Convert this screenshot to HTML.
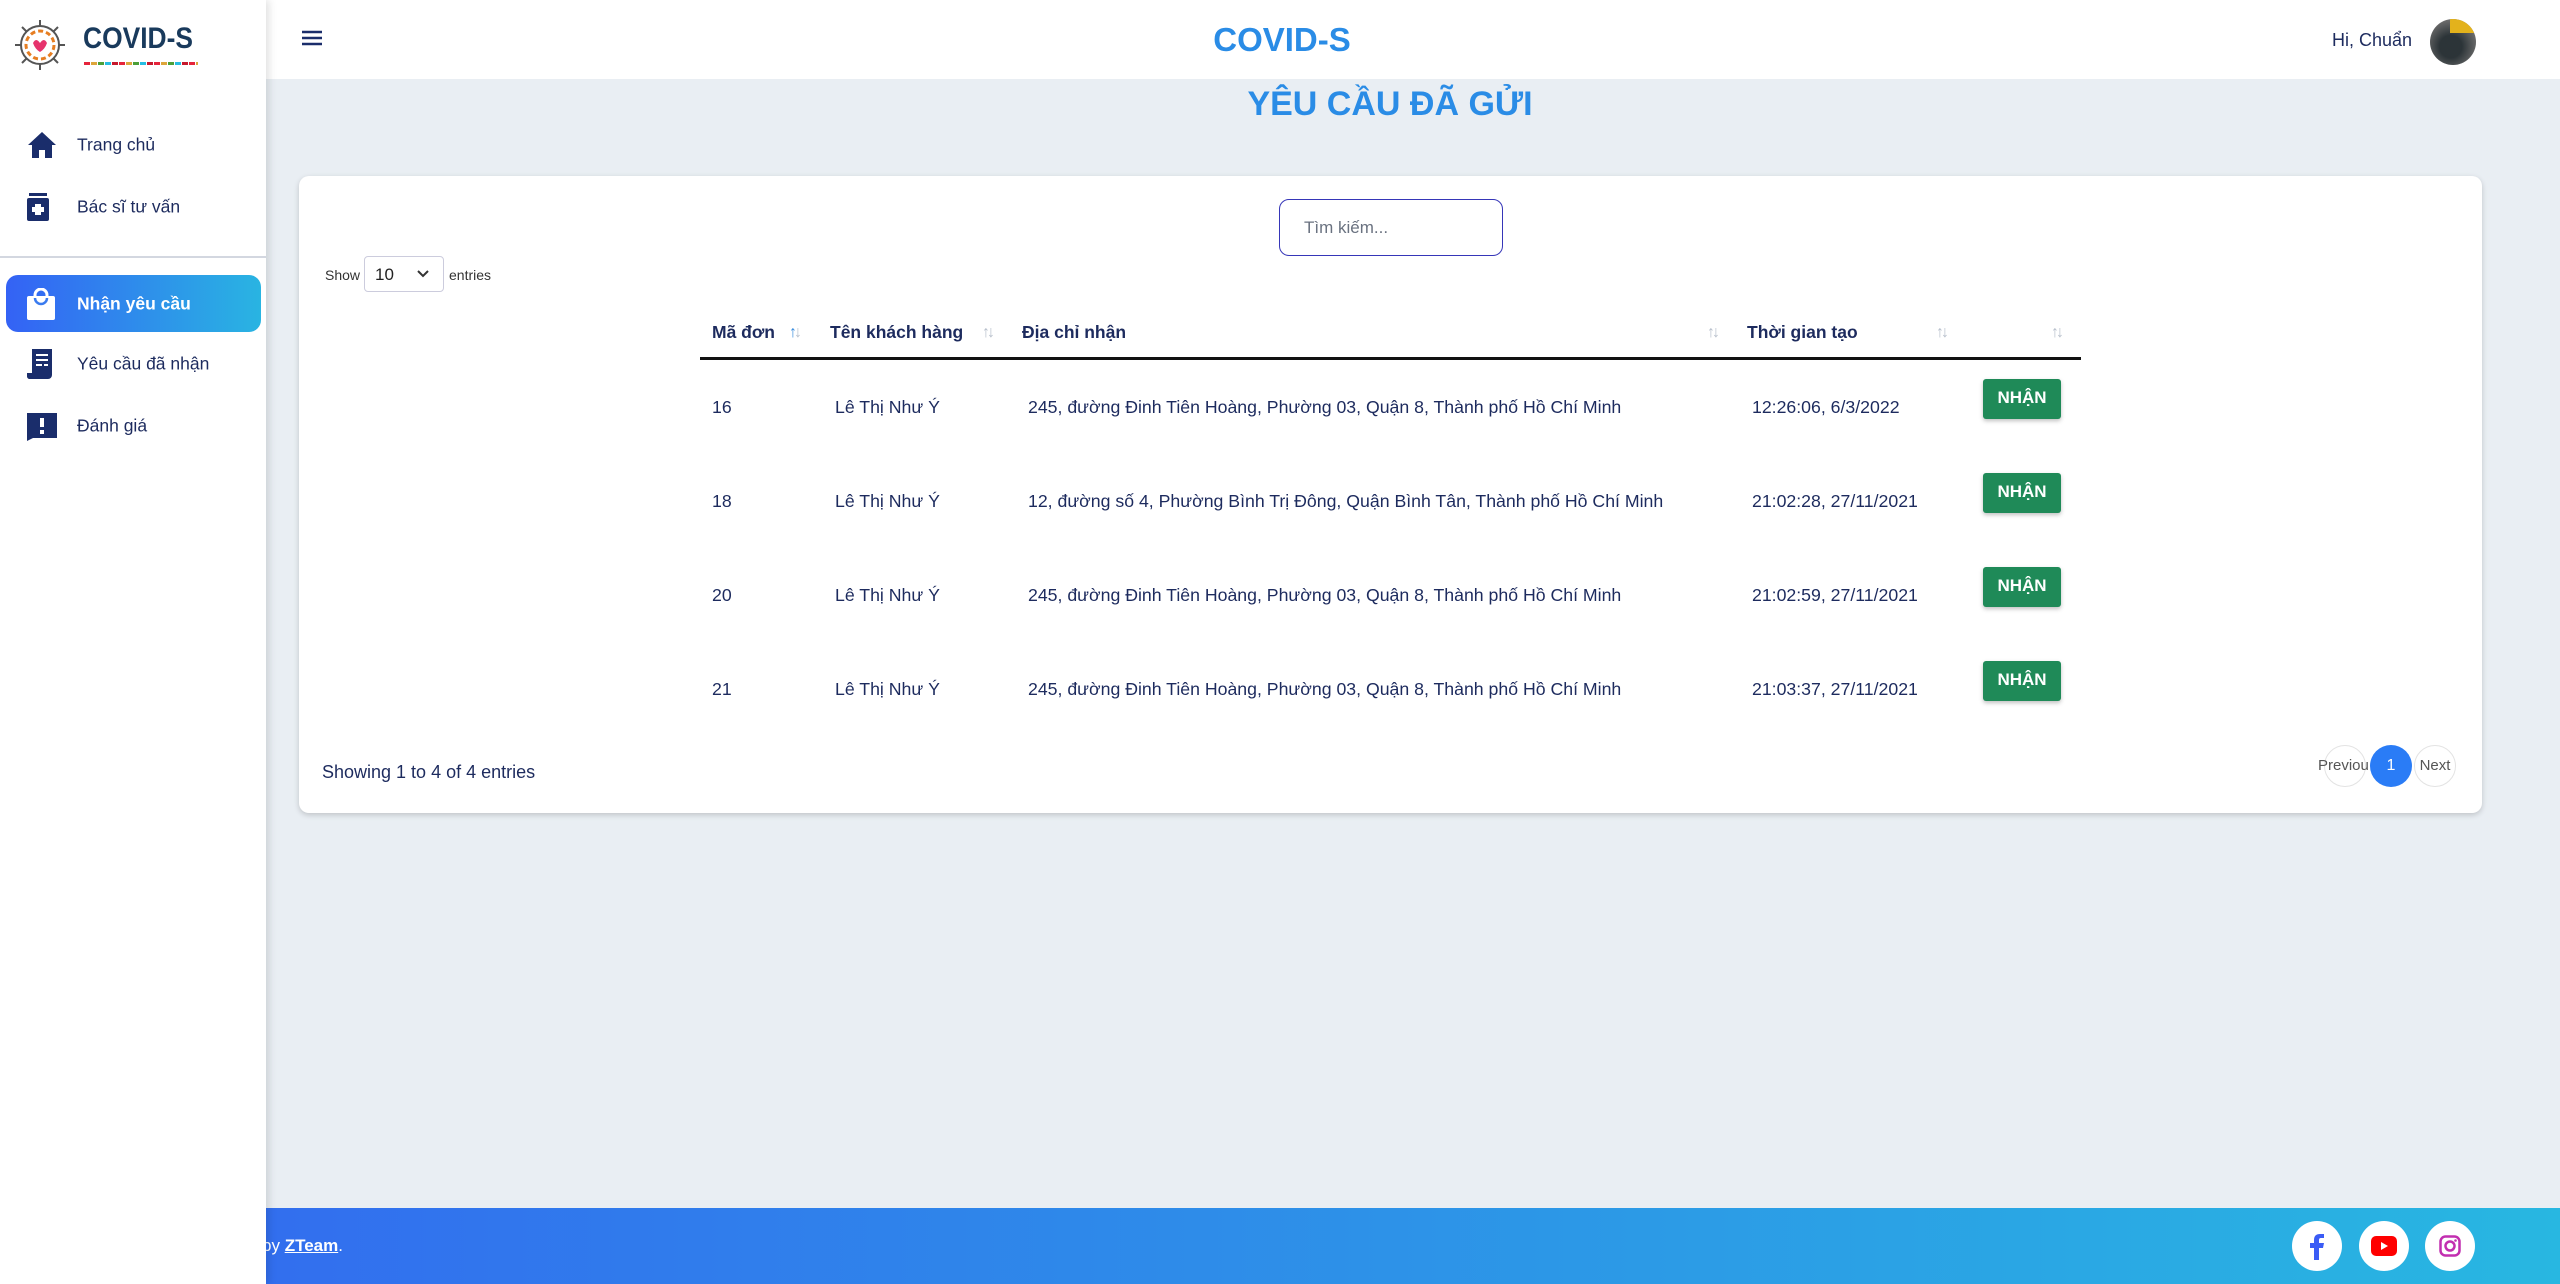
<!DOCTYPE html>
<html><head><meta charset="utf-8">
<style>
*{box-sizing:border-box;margin:0;padding:0}
body{width:2560px;height:1284px;overflow:hidden;background:#e9eef3;font-family:"Liberation Sans",sans-serif;color:#1d2b5e;position:relative}
.sb{position:absolute;left:0;top:0;width:266px;height:1284px;background:#fff;z-index:5;box-shadow:3px 0 8px rgba(0,0,0,.12)}
.hdr{position:absolute;left:266px;top:0;right:0;height:79px;background:#fff}
.item{position:absolute;left:0;width:266px;height:56px;font-size:17.5px;color:#1d2b5e}
.item .t{position:absolute;left:77px;top:50%;transform:translateY(-50%)}
.item svg{position:absolute;left:27px;top:50%;transform:translateY(-50%)}
.act{left:6px;width:255px;border-radius:12px;background:linear-gradient(90deg,#3462f5,#29b4e2);color:#fff;font-weight:bold}
.card{position:absolute;left:299px;top:176px;width:2183px;height:637px;background:#fff;border-radius:10px;box-shadow:0 2px 6px rgba(0,0,0,.18)}
.cell{position:absolute;font-size:17.7px;white-space:nowrap}
.th{font-weight:bold;font-size:17.5px}
.btn{position:absolute;left:1983px;width:78px;height:40px;background:#1f8a58;color:#fff;font-size:17px;font-weight:bold;text-align:center;line-height:38px;border-radius:3px;box-shadow:0 2px 4px rgba(0,0,0,.25)}
.ar{position:absolute;color:#b8c0cc;font-size:16px;letter-spacing:-3px}
.foot{position:absolute;left:0;top:1208px;width:2560px;height:76px;background:linear-gradient(90deg,#3366f0,#28b7e1)}
.soc{position:absolute;top:13px;width:50px;height:50px;border-radius:50%;background:#fff}
</style></head><body>
<div class="sb">
  <svg style="position:absolute;left:13px;top:18px" width="54" height="55" viewBox="0 0 54 55">
    <circle cx="27" cy="27" r="19" fill="none" stroke="#555" stroke-width="2"/>
    <circle cx="27" cy="27" r="14" fill="none" stroke="#e67e22" stroke-width="3" stroke-dasharray="5 3"/>
    <path d="M20 25 q3-6 7 0 q4-6 7 0 q-2 6-7 9 q-5-3-7-9z" fill="#e6336d"/>
    <path d="M27 2v6M27 46v6M2 27h6M46 27h6M9 9l5 5M45 9l-5 5M9 45l5-5M45 45l-5-5" stroke="#555" stroke-width="2"/>
  </svg>
  <div style="position:absolute;left:83px;top:22px;font-size:30px;font-weight:900;color:#193a5c;transform:scaleX(.88);transform-origin:left;white-space:nowrap">COVID-S</div>
  <div style="position:absolute;left:84px;top:62px;width:114px;height:3px;background:repeating-linear-gradient(90deg,#e5243b 0 6px,transparent 6px 7px,#dda63a 7px 13px,transparent 13px 14px,#4c9f38 14px 20px,transparent 20px 21px,#26bde2 21px 27px,transparent 27px 28px,#c5192d 28px 34px,transparent 34px 35px)"></div>
  <div class="item" style="top:117px"><svg width="30" height="28" viewBox="0 0 30 28"><path d="M15 1L1 14h4v13h7v-8h6v8h7V14h4z" fill="#1a2d6b"/></svg><span class="t">Trang chủ</span></div>
  <div class="item" style="top:179px"><svg width="22" height="28" viewBox="0 0 22 28"><rect x="2" y="0" width="18" height="3" fill="#1a2d6b"/><rect x="0" y="5" width="22" height="23" rx="2" fill="#1a2d6b"/><path d="M8 11h6v3h3v5h-3v3H8v-3H5v-5h3z" fill="#fff"/></svg><span class="t">Bác sĩ tư vấn</span></div>
  <div style="position:absolute;left:0;top:256px;width:266px;height:2px;background:#d3d7e0"></div>
  <div class="item act" style="top:275px;height:57px"><svg style="left:21px" width="28" height="32" viewBox="0 0 28 32"><rect x="0" y="8" width="28" height="24" rx="2" fill="#fff"/><path d="M8 10a6 6 0 0 0 12 0" stroke="#3a7bef" stroke-width="2.5" fill="none"/><path d="M8 9V7a6 6 0 0 1 12 0v2" stroke="#fff" stroke-width="3" fill="none"/></svg><span class="t" style="left:71px">Nhận yêu cầu</span></div>
  <div class="item" style="top:336px"><svg width="28" height="30" viewBox="0 0 28 30"><path d="M5 0h20v26a4 4 0 0 1-4 4H2a3 3 0 0 1-2-3v-3h5z" fill="#1a2d6b"/><path d="M9 6h12M9 11h12M9 16h6M17 16h4" stroke="#fff" stroke-width="2"/></svg><span class="t">Yêu cầu đã nhận</span></div>
  <div class="item" style="top:398px"><svg width="30" height="30" viewBox="0 0 30 30"><path d="M0 2h30v25H6l-6 3z" fill="#1a2d6b"/><rect x="13" y="7" width="4" height="9" fill="#fff"/><rect x="13" y="19" width="4" height="4" fill="#fff"/></svg><span class="t">Đánh giá</span></div>
</div>
<div class="hdr">
  <svg style="position:absolute;left:36px;top:30px" width="20" height="16"><path d="M0 2h20M0 8h20M0 14h20" stroke="#1a2d6b" stroke-width="2.5"/></svg>
  <div style="position:absolute;left:1016px;top:21px;transform:translateX(-50%);white-space:nowrap;font-size:33px;font-weight:bold;color:#2a8ce6">COVID-S</div>
  <div style="position:absolute;right:148px;top:30px;font-size:18px;color:#1d2b5e">Hi, Chuẩn</div>
  <div style="position:absolute;left:2164px;top:19px;width:46px;height:46px;border-radius:50%;background:radial-gradient(circle at 45% 60%,#2c3438 30%,#6a6a6a 70%);overflow:hidden"><div style="position:absolute;right:0;top:0;width:26px;height:14px;background:#e3b21c"></div></div>
</div>
<div style="position:absolute;left:1390px;top:85px;transform:translateX(-50%);font-size:34px;font-weight:bold;color:#2a8ce6;white-space:nowrap">YÊU CẦU ĐÃ GỬI</div>
<div class="card">
  <div style="position:absolute;left:980px;top:23px;width:224px;height:57px;border:1.5px solid #3636b8;border-radius:10px;font-size:17px;color:#6a7280;padding:18px 0 0 24px">Tìm kiếm...</div>
  <div class="cell" style="left:26px;top:91px;font-size:14px;color:#333">Show</div>
  <div style="position:absolute;left:65px;top:80px;width:80px;height:36px;border:1px solid #ccd;border-radius:4px;font-size:17px;padding:8px 0 0 10px;color:#222">10<svg style="position:absolute;right:14px;top:13px" width="12" height="8"><path d="M1 1l5 5 5-5" stroke="#333" stroke-width="2" fill="none"/></svg></div>
  <div class="cell" style="left:150px;top:91px;font-size:14px;color:#333">entries</div>

  <div class="cell th" style="left:413px;top:146px">Mã đơn</div><div class="ar" style="left:490px;top:148px"><span style="color:#3a8dde">↑</span>↓</div>
  <div class="cell th" style="left:531px;top:146px">Tên khách hàng</div><div class="ar" style="left:683px;top:148px">↑↓</div>
  <div class="cell th" style="left:723px;top:146px">Địa chỉ nhận</div><div class="ar" style="left:1408px;top:148px">↑↓</div>
  <div class="cell th" style="left:1448px;top:146px">Thời gian tạo</div><div class="ar" style="left:1637px;top:148px">↑↓</div>
  <div class="ar" style="left:1752px;top:148px">↑↓</div>
  <div style="position:absolute;left:401px;top:181px;width:1381px;height:3px;background:#111"></div>

  <div class="cell" style="left:413px;top:221px">16</div><div class="cell" style="left:536px;top:221px">Lê Thị Như Ý</div><div class="cell" style="left:729px;top:221px">245, đường Đinh Tiên Hoàng, Phường 03, Quận 8, Thành phố Hồ Chí Minh</div><div class="cell" style="left:1453px;top:221px">12:26:06, 6/3/2022</div>
  <div class="btn" style="left:1684px;top:203px">NHẬN</div>
  <div class="cell" style="left:413px;top:315px">18</div><div class="cell" style="left:536px;top:315px">Lê Thị Như Ý</div><div class="cell" style="left:729px;top:315px">12, đường số 4, Phường Bình Trị Đông, Quận Bình Tân, Thành phố Hồ Chí Minh</div><div class="cell" style="left:1453px;top:315px">21:02:28, 27/11/2021</div>
  <div class="btn" style="left:1684px;top:297px">NHẬN</div>
  <div class="cell" style="left:413px;top:409px">20</div><div class="cell" style="left:536px;top:409px">Lê Thị Như Ý</div><div class="cell" style="left:729px;top:409px">245, đường Đinh Tiên Hoàng, Phường 03, Quận 8, Thành phố Hồ Chí Minh</div><div class="cell" style="left:1453px;top:409px">21:02:59, 27/11/2021</div>
  <div class="btn" style="left:1684px;top:391px">NHẬN</div>
  <div class="cell" style="left:413px;top:503px">21</div><div class="cell" style="left:536px;top:503px">Lê Thị Như Ý</div><div class="cell" style="left:729px;top:503px">245, đường Đinh Tiên Hoàng, Phường 03, Quận 8, Thành phố Hồ Chí Minh</div><div class="cell" style="left:1453px;top:503px">21:03:37, 27/11/2021</div>
  <div class="btn" style="left:1684px;top:485px">NHẬN</div>

  <div class="cell" style="left:23px;top:586px;font-size:18px">Showing 1 to 4 of 4 entries</div>
  <div style="position:absolute;left:2025px;top:569px;width:42px;height:42px;border:1px solid #e3e3e3;border-radius:50%"></div>
  <div class="cell" style="left:2019px;top:581px;font-size:15px;color:#555;width:50px;overflow:hidden">Previous</div>
  <div style="position:absolute;left:2071px;top:569px;width:42px;height:42px;border-radius:50%;background:#2a7cf6;color:#fff;font-size:16px;text-align:center;line-height:42px">1</div>
  <div style="position:absolute;left:2115px;top:569px;width:42px;height:42px;border:1px solid #e3e3e3;border-radius:50%;font-size:15px;color:#555;text-align:center;line-height:40px">Next</div>
</div>
<div class="foot">
  <div style="position:absolute;left:262px;top:28px;font-size:17px;color:#fff">by <b style="text-decoration:underline">ZTeam</b>.</div>
  <div class="soc" style="left:2292px"><svg style="position:absolute;left:17px;top:13px" width="16" height="26" viewBox="0 0 16 26"><path d="M10 26V14h4l1-5h-5V6c0-1.5.6-2 2-2h3V0h-4C7 0 5 2 5 6v3H1v5h4v12z" fill="#3b5cf5"/></svg></div>
  <div class="soc" style="left:2359px"><svg style="position:absolute;left:12px;top:15px" width="26" height="20" viewBox="0 0 26 20"><rect width="26" height="20" rx="5" fill="#f00"/><path d="M10 6l7 4-7 4z" fill="#fff"/></svg></div>
  <div class="soc" style="left:2425px"><svg style="position:absolute;left:14px;top:14px" width="22" height="22" viewBox="0 0 22 22"><rect x="1.5" y="1.5" width="19" height="19" rx="5" fill="none" stroke="#c22fb0" stroke-width="2.5"/><circle cx="11" cy="11" r="4.5" fill="none" stroke="#c22fb0" stroke-width="2.5"/><circle cx="16.5" cy="5.5" r="1.3" fill="#c22fb0"/></svg></div>
</div>
</body></html>
